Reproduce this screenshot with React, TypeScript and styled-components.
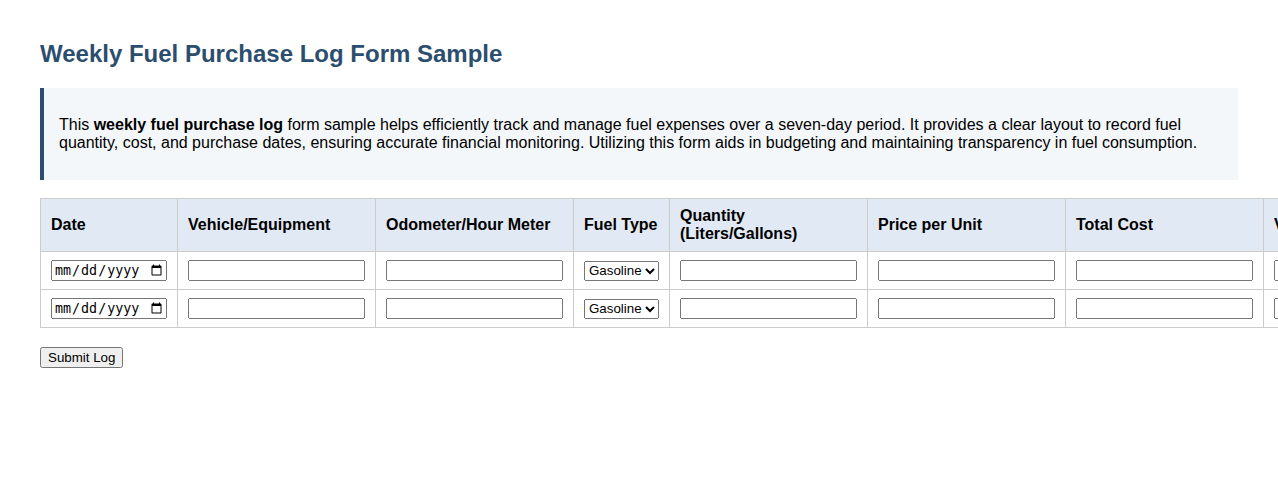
import styled, { createGlobalStyle } from 'styled-components';

const GlobalStyle = createGlobalStyle`
  html, body {
    margin: 0;
    padding: 0;
    background: #ffffff;
    overflow-x: hidden;
  }
  body {
    font-family: 'Liberation Sans', Arial, sans-serif;
    color: #000000;
  }
`;

const Page = styled.div`
  padding: 40px 40px 40px 40px;
  width: 1198px;
`;

const Title = styled.h1`
  margin: 0 0 20px 0;
  font-size: 24px;
  font-weight: bold;
  color: #2c4e6e;
`;

const Intro = styled.div`
  background: #f4f7fa;
  border-left: 4px solid #2c4e6e;
  padding: 12px 15px;
  margin-bottom: 18px;

  p {
    margin: 16px 0;
    font-size: 16px;
    line-height: 18px;
  }
`;

const Table = styled.table`
  border-collapse: collapse;
  width: max-content;
`;

const HeadCell = styled.th<{ $w: number }>`
  width: ${p => p.$w}px;
  box-sizing: border-box;
  background: #e1e9f4;
  border: 1px solid #cccccc;
  padding: 8px 10px;
  text-align: left;
  vertical-align: middle;
  font-size: 16px;
  line-height: 18px;
  font-weight: bold;
`;

const Cell = styled.td`
  border: 1px solid #cccccc;
  padding: 8px 10px;
  vertical-align: middle;
`;

const TextInput = styled.input`
  display: block;
  box-sizing: border-box;
  width: 177px;
  height: 21px;
  font-family: 'Liberation Sans', Arial, sans-serif;
  font-size: 13.33px;
`;

const DateInput = styled.input`
  display: block;
  box-sizing: border-box;
  width: 116px;
  height: 21px;
  font-size: 13.33px;
`;

const FuelSelect = styled.select`
  display: block;
  box-sizing: border-box;
  width: 75px;
  height: 20px;
  font-family: 'Liberation Sans', Arial, sans-serif;
  font-size: 13.33px;
`;

const SubmitButton = styled.button`
  margin-top: 19px;
  height: 21px;
  padding: 1px 6px;
  font-family: 'Liberation Sans', Arial, sans-serif;
  font-size: 13.33px;
`;

const COLUMNS: { label: string; w: number }[] = [
  { label: 'Date', w: 137 },
  { label: 'Vehicle/Equipment', w: 198 },
  { label: 'Odometer/Hour Meter', w: 198 },
  { label: 'Fuel Type', w: 96 },
  { label: 'Quantity (Liters/Gallons)', w: 198 },
  { label: 'Price per Unit', w: 198 },
  { label: 'Total Cost', w: 198 },
  { label: 'Vendor/Station', w: 198 },
  { label: 'Notes', w: 198 },
];

function LogRow() {
  return (
    <tr>
      <Cell>
        <DateInput type='date' />
      </Cell>
      <Cell>
        <TextInput type='text' />
      </Cell>
      <Cell>
        <TextInput type='text' />
      </Cell>
      <Cell>
        <FuelSelect defaultValue='Gasoline'>
          <option>Gasoline</option>
          <option>Diesel</option>
          <option>Electric</option>
          <option>Other</option>
        </FuelSelect>
      </Cell>
      <Cell>
        <TextInput type='text' />
      </Cell>
      <Cell>
        <TextInput type='text' />
      </Cell>
      <Cell>
        <TextInput type='text' />
      </Cell>
      <Cell>
        <TextInput type='text' />
      </Cell>
      <Cell>
        <TextInput type='text' />
      </Cell>
    </tr>
  );
}

export default function App() {
  return (
    <>
      <GlobalStyle />
      <Page>
        <Title>Weekly Fuel Purchase Log Form Sample</Title>
        <Intro>
          <p>
            This <strong>weekly fuel purchase log</strong> form sample helps
            efficiently track and manage fuel expenses over a seven-day period.
            It provides a clear layout to record fuel quantity, cost, and
            purchase dates, ensuring accurate financial monitoring. Utilizing
            this form aids in budgeting and maintaining transparency in fuel
            consumption.
          </p>
        </Intro>
        <form onSubmit={e => e.preventDefault()}>
          <Table>
            <thead>
              <tr>
                {COLUMNS.map(c => (
                  <HeadCell key={c.label} $w={c.w}>
                    {c.label}
                  </HeadCell>
                ))}
              </tr>
            </thead>
            <tbody>
              <LogRow />
              <LogRow />
            </tbody>
          </Table>
          <SubmitButton type='submit'>Submit Log</SubmitButton>
        </form>
      </Page>
    </>
  );
}
